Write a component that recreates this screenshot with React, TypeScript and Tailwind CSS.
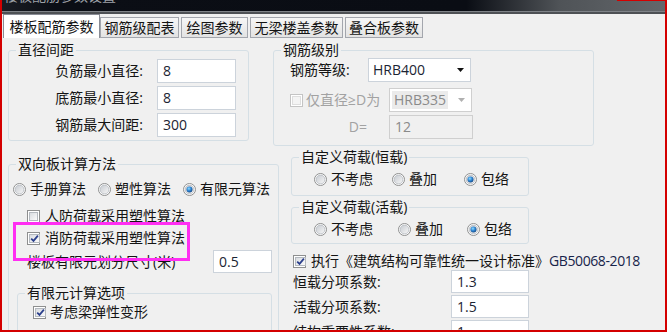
import type { ReactNode } from "react";

type GroupProps = {
  title: string;
  className?: string;
  children?: ReactNode;
};

function Group({ title, className = "", children }: GroupProps) {
  return (
    <fieldset
      className={`shrink-0 rounded-[3px] border border-[#d5dfe5] ${className}`}
    >
      <legend className="ml-[7px] px-[2px] leading-[16px]">{title}</legend>
      {children}
    </fieldset>
  );
}

function CheckBox({
  checked = false,
  disabled = false,
}: {
  checked?: boolean;
  disabled?: boolean;
}) {
  return (
    <span
      className={`flex h-[13px] w-[13px] shrink-0 border bg-white p-[1px] ${
        disabled ? "border-[#c4c4c4]" : "border-[#8e8f8f]"
      }`}
    >
      <span
        className={`flex flex-1 items-center justify-center border ${
          disabled
            ? "border-[#dedede] bg-[#f4f4f4]"
            : "border-[#b4b9bf] bg-gradient-to-br from-[#d9dce0] to-[#fbfbfb]"
        }`}
      >
        {checked && (
          <svg width="9" height="9" viewBox="0 0 9 9" className="shrink-0">
            <path
              d="M1.2 4.6 L3.5 6.9 L7.9 1.6"
              fill="none"
              stroke="#2b3f8c"
              strokeWidth="1.7"
            />
          </svg>
        )}
      </span>
    </span>
  );
}

function Radio({ checked = false }: { checked?: boolean }) {
  return (
    <svg width="13" height="13" viewBox="0 0 13 13" className="shrink-0">
      <defs>
        <linearGradient id="radioFill" x1="0" y1="0" x2="1" y2="1">
          <stop offset="0" stopColor="#c6cad0" />
          <stop offset="1" stopColor="#f8f8f8" />
        </linearGradient>
        <radialGradient id="radioDot" cx="0.4" cy="0.35" r="0.7">
          <stop offset="0" stopColor="#8fdcff" />
          <stop offset="0.5" stopColor="#2f86d4" />
          <stop offset="1" stopColor="#14457f" />
        </radialGradient>
      </defs>
      <circle cx="6.5" cy="6.5" r="6" fill="#fff" stroke="#8e8f8f" />
      <circle
        cx="6.5"
        cy="6.5"
        r="4.4"
        fill="url(#radioFill)"
        stroke="#b4b9bf"
        strokeWidth="0.8"
      />
      {checked && <circle cx="6.5" cy="6.5" r="3" fill="url(#radioDot)" />}
    </svg>
  );
}

function Field({
  value,
  className = "",
  disabled = false,
}: {
  value: string;
  className?: string;
  disabled?: boolean;
}) {
  return (
    <div
      className={`flex shrink-0 items-center border px-[5px] ${
        disabled
          ? "border-[#cfcfcf] bg-[#f0f0f0] text-[#8a8a8a]"
          : "border-[#ccd3db] bg-white text-[#1b2433]"
      } ${className}`}
    >
      {value}
    </div>
  );
}

function Select({
  value,
  className = "",
  disabled = false,
}: {
  value: string;
  className?: string;
  disabled?: boolean;
}) {
  return (
    <div
      className={`flex h-[24px] shrink-0 items-center justify-between border pl-[2px] pr-[6px] ${
        disabled
          ? "border-[#cfcfcf] bg-white text-[#8a8a8a]"
          : "border-[#ccd3db] bg-white text-[#1b2433]"
      } ${className}`}
    >
      <span
        className={`flex h-[18px] items-center px-[2px] ${
          disabled ? "w-[56px] bg-[#ebebeb]" : ""
        }`}
      >
        {value}
      </span>
      <svg width="7" height="4" viewBox="0 0 7 4">
        <path d="M0 0H7L3.5 4Z" fill={disabled ? "#b0b0b0" : "#111"} />
      </svg>
    </div>
  );
}

function RadioItem({
  label,
  checked = false,
  className = "",
}: {
  label: string;
  checked?: boolean;
  className?: string;
}) {
  return (
    <div className={`flex shrink-0 items-center gap-[4px] ${className}`}>
      <Radio checked={checked} />
      <span>{label}</span>
    </div>
  );
}

const tabs = [
  { label: "钢筋级配表", w: "w-[79px]" },
  { label: "绘图参数", w: "w-[67px]" },
  { label: "无梁楼盖参数", w: "w-[93px]" },
  { label: "叠合板参数", w: "w-[78px]" },
];

export default function App() {
  return (
    <div className="relative flex h-[332px] w-[667px] flex-col overflow-hidden border-x-2 border-b-2 border-[#d40000] bg-[#f0f0f0] font-['Open_Sans','Noto_Sans_CJK_SC',sans-serif] text-[14px] leading-[16px] text-[#141414]">
      {/* window title bar, mostly cut off */}
      <div className="flex h-[11px] shrink-0 overflow-hidden bg-[linear-gradient(90deg,#1a1d24_0%,#0b0e15_8%,#0a0d14_70%,#4f5357_84%,#63676b_100%)]">
        <span className="-mt-[12px] pl-[2px] text-[#9da1a8]">楼板配筋参数设置</span>
        <span className="ml-auto h-[1px] w-[48px] bg-[#d40000]" />
      </div>
      <div className="h-[1px] shrink-0 bg-[#7f8388]" />
      <div className="h-[2px] shrink-0 bg-[#4d5054]" />

      {/* tabs */}
      <div className="flex h-[24px] shrink-0 items-end pl-[1px]">
        <div className="flex h-[24px] w-[97px] items-center justify-center border-x border-t border-[#898c95] bg-white">
          楼板配筋参数
        </div>
        {tabs.map((t, i) => (
          <div
            key={t.label}
            className={`flex h-[21px] ${t.w} ${
              i > 0 ? "ml-[2px]" : ""
            } items-center justify-center border border-[#a3a6ad] bg-gradient-to-b from-[#f6f6f6] to-[#e3e3e3]`}
          >
            {t.label}
          </div>
        ))}
      </div>

      {/* panel */}
      <div className="flex flex-col pl-[6px] pt-[4px]">
        <div className="flex items-start gap-[24px]">
          <Group title="直径间距" className="h-[99px] w-[241px]">
            <div className="flex flex-col gap-[3px] pt-[1px]">
              {[
                ["负筋最小直径:", "8"],
                ["底筋最小直径:", "8"],
                ["钢筋最大间距:", "300"],
              ].map(([label, value]) => (
                <div key={label} className="flex h-[24px] items-center">
                  <span className="w-[134px] text-right">{label}</span>
                  <Field value={value} className="ml-[14px] h-[24px] w-[79px]" />
                </div>
              ))}
            </div>
          </Group>

          <Group title="钢筋级别" className="h-[104px] w-[321px]">
            <div className="flex flex-col pl-[16px]">
              <div className="flex h-[24px] items-center">
                <span className="w-[78px]">钢筋等级:</span>
                <Select value="HRB400" className="w-[103px]" />
              </div>
              <div className="mt-[6px] flex h-[24px] items-center">
                <div className="flex w-[99px] items-center gap-[3px] text-[#a2a2a2]">
                  <CheckBox disabled />
                  <span>仅直径≥D为</span>
                </div>
                <Select value="HRB335" disabled className="w-[83px]" />
              </div>
              <div className="mt-[3px] flex h-[24px] items-center">
                <span className="w-[99px] pr-[22px] text-right text-[#a2a2a2]">
                  D=
                </span>
                <Field value="12" disabled className="h-[24px] w-[84px]" />
              </div>
            </div>
          </Group>
        </div>

        <div className="flex items-start gap-[12px]">
          {/* left column */}
          <Group title="双向板计算方法" className="mt-[10px] h-[200px] w-[271px]">
            <div className="mt-[9px] flex h-[16px] items-center pl-[4px]">
              <RadioItem label="手册算法" className="w-[85px]" />
              <RadioItem label="塑性算法" className="w-[85px]" />
              <RadioItem label="有限元算法" checked />
            </div>
            <div className="mt-[11px] flex h-[16px] items-center gap-[5px] pl-[18px]">
              <CheckBox />
              <span>人防荷载采用塑性算法</span>
            </div>
            <div className="mt-[6px] flex h-[16px] items-center gap-[5px] pl-[18px]">
              <CheckBox checked />
              <span>消防荷载采用塑性算法</span>
            </div>
            <div className="mt-[4px] flex h-[23px] items-center pl-[18px]">
              <span className="w-[186px]">楼板有限元划分尺寸(米)</span>
              <Field value="0.5" className="h-[23px] w-[59px]" />
            </div>
            <Group title="有限元计算选项" className="ml-[8px] mt-[12px] h-[80px] w-[255px]">
              <div className="mt-[3px] flex h-[16px] items-center gap-[4px] pl-[15px]">
                <CheckBox checked />
                <span>考虑梁弹性变形</span>
              </div>
            </Group>
          </Group>

          {/* right column */}
          <div className="mt-[3px] flex w-[360px] flex-col">
            <Group title="自定义荷载(恒载)" className="h-[47px] w-[238px]">
              <div className="mt-[6px] flex h-[16px] items-center pl-[22px]">
                <RadioItem label="不考虑" className="w-[78px]" />
                <RadioItem label="叠加" className="w-[72px]" />
                <RadioItem label="包络" checked />
              </div>
            </Group>
            <Group title="自定义荷载(活载)" className="mt-[3px] h-[45px] w-[238px]">
              <div className="mt-[6px] flex h-[16px] items-center pl-[22px]">
                <RadioItem label="不考虑" className="w-[84px]" />
                <RadioItem label="叠加" className="w-[69px]" />
                <RadioItem label="包络" checked />
              </div>
            </Group>
            <div className="mt-[9px] flex h-[16px] items-center gap-[5px] pl-[2px]">
              <CheckBox checked />
              <span className="whitespace-nowrap">
                执行《建筑结构可靠性统一设计标准》
                <span className="tracking-[-0.4px] text-[#17244a]">GB50068-2018</span>
              </span>
            </div>
            <div className="mt-[1px] flex flex-col gap-[2px] pl-[2px]">
              {[
                ["恒载分项系数:", "1.3"],
                ["活载分项系数:", "1.5"],
                ["结构重要性系数:", "1"],
              ].map(([label, value]) => (
                <div key={label} className="flex h-[23px] items-center">
                  <span className="w-[158px]">{label}</span>
                  <Field value={value} className="h-[23px] w-[78px]" />
                </div>
              ))}
            </div>
          </div>
        </div>
      </div>

      {/* annotation highlight over the 消防 checkbox */}
      <div className="pointer-events-none absolute left-[11px] top-[222px] h-[39px] w-[177px] border-[3px] border-[#ff2ef2]" />
    </div>
  );
}
